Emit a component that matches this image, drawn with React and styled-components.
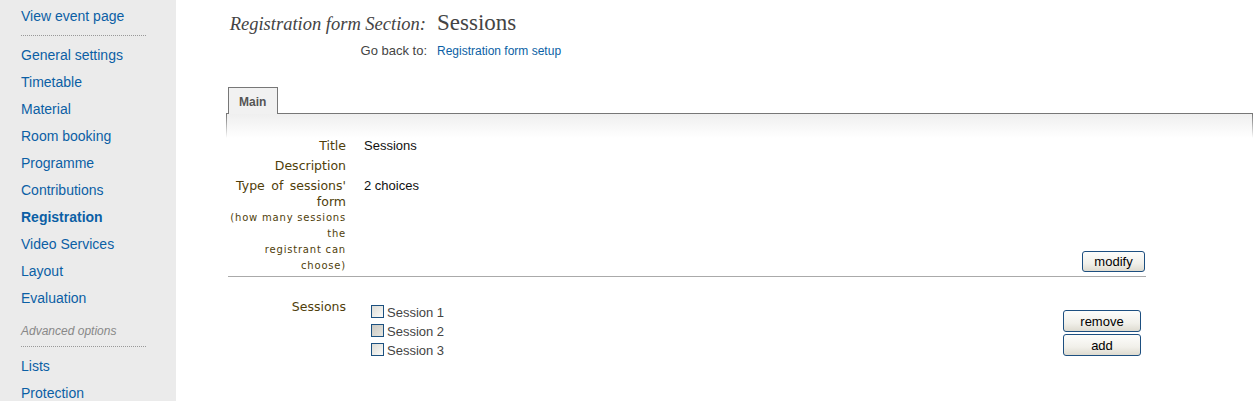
import React from 'react'
import styled, { createGlobalStyle } from 'styled-components'

const GlobalStyle = createGlobalStyle`
  html, body {
    margin: 0;
    padding: 0;
    background: #fff;
    font-family: "Liberation Sans", Arial, sans-serif;
  }
`

const menu = [
  'General settings',
  'Timetable',
  'Material',
  'Room booking',
  'Programme',
  'Contributions',
  'Registration',
  'Video Services',
  'Layout',
  'Evaluation',
]

const sessions = ['Session 1', 'Session 2', 'Session 3']

const hintLines = ['(how many sessions', 'the', 'registrant can', 'choose)']

export default function App() {
  return (
    <>
      <GlobalStyle />
      <Page>
        <Sidebar>
          <MenuLink>View event page</MenuLink>
          <Separator />
          {menu.map((item) => (
            <MenuLink key={item} active={item === 'Registration'}>
              {item}
            </MenuLink>
          ))}
          <GroupTitle>Advanced options</GroupTitle>
          <Separator />
          <MenuLink>Lists</MenuLink>
          <MenuLink>Protection</MenuLink>
        </Sidebar>

        <Main>
          <Header>
            <PageTitle>Registration form Section:</PageTitle>
            <PageName>Sessions</PageName>
            <BackLabel>Go back to:</BackLabel>
            <BackLink>Registration form setup</BackLink>
          </Header>

          <Tabs>
            <Tab>Main</Tab>
          </Tabs>
          <Panel>
            <FormTable>
              <Label>Title</Label>
              <Value>Sessions</Value>

              <Label>Description</Label>
              <Value />

              <Label divider>
                Type of sessions' form
                <Hint>
                  {hintLines.map((line) => (
                    <div key={line}>{line}</div>
                  ))}
                </Hint>
              </Label>
              <Value divider>
                2 choices
                <ButtonRow>
                  <Button width={63}>modify</Button>
                </ButtonRow>
              </Value>

              <Label spaced>Sessions</Label>
              <SessionCell>
                <SessionList>
                  {sessions.map((s, i) => (
                    <SessionItem key={s}>
                      <CheckBox dim={i === 1} />
                      {s}
                    </SessionItem>
                  ))}
                </SessionList>
                <ButtonColumn>
                  <Button width={78} tall>remove</Button>
                  <Button width={78} tall>add</Button>
                </ButtonColumn>
              </SessionCell>
            </FormTable>
          </Panel>
        </Main>
      </Page>
    </>
  )
}

const Page = styled.div`
  display: flex;
  min-height: 100vh;
`

const Sidebar = styled.nav`
  width: 176px;
  flex-shrink: 0;
  background: #ebebeb;
  padding: 3px 0 0 21px;
  box-sizing: border-box;
  display: flex;
  flex-direction: column;
  align-items: flex-start;
`

const MenuLink = styled.a`
  font-size: 14px;
  line-height: 27px;
  color: #0b5fa5;
  font-weight: ${(p) => (p.active ? 'bold' : 'normal')};
  cursor: pointer;
  white-space: nowrap;
`

const Separator = styled.div`
  width: 125px;
  border-top: 1px dotted #999;
  margin: 5px 0 6px;
`

const GroupTitle = styled.div`
  font-size: 12px;
  line-height: 16px;
  font-style: italic;
  color: #888;
  margin-top: 11px;
  margin-bottom: 2px;
`

const Main = styled.main`
  flex: 1;
  padding: 0 7px 0 50px;
`

const Header = styled.div`
  display: grid;
  grid-template-columns: 197px auto;
  column-gap: 11px;
  align-items: baseline;
  padding: 10px 0 0 3px;
`

const PageTitle = styled.h1`
  margin: 0;
  justify-self: end;
  font-family: "Liberation Serif", "Times New Roman", serif;
  font-style: italic;
  font-weight: normal;
  font-size: 18.5px;
  color: #444;
  white-space: nowrap;
`

const PageName = styled.span`
  font-family: "Liberation Serif", "Times New Roman", serif;
  font-size: 23px;
  color: #444;
`

const BackLabel = styled.span`
  justify-self: end;
  font-size: 13px;
  color: #444;
  margin-top: 7px;
  margin-right: -1px;
`

const BackLink = styled.a`
  font-size: 12px;
  color: #0b5fa5;
  cursor: pointer;
`

const Tabs = styled.div`
  display: flex;
  margin-top: 29px;
  padding-left: 2px;
`

const Tab = styled.div`
  position: relative;
  z-index: 1;
  margin-bottom: -1px;
  width: 50px;
  height: 27px;
  box-sizing: border-box;
  padding-left: 10px;
  line-height: 28px;
  border: 1px solid #777;
  border-bottom: none;
  background: #f1f1f1;
  font-size: 12px;
  font-weight: bold;
  color: #555;
`

const Panel = styled.section`
  border-top: 1px solid #777;
  padding: 22px 0 40px 2px;
  background:
    linear-gradient(#777, rgba(119, 119, 119, 0)) left top / 1px 24px no-repeat,
    linear-gradient(#777, rgba(119, 119, 119, 0)) right top / 1px 24px no-repeat,
    linear-gradient(#efefef, #fff) left top / 100% 24px no-repeat;
`

const FormTable = styled.div`
  width: 918px;
  display: grid;
  grid-template-columns: 118px 1fr;
  column-gap: 18px;
`

const Label = styled.div`
  text-align: right;
  font-family: "DejaVu Sans", Verdana, sans-serif;
  font-size: 12.5px;
  word-spacing: 2.5px;
  line-height: 16px;
  color: #4f3e0a;
  padding: ${(p) => (p.spaced ? '22px 0 2px' : '2px 0')};
  ${(p) => p.divider && 'border-bottom: 1px solid #aaa; margin-right: -18px; padding-right: 18px;'}
`

const Hint = styled.div`
  font-size: 10px;
  letter-spacing: 0.8px;
  word-spacing: 0;
  line-height: 16px;
`

const Value = styled.div`
  font-size: 13px;
  line-height: 16px;
  color: #111;
  padding: 2px 0;
  display: flex;
  flex-direction: column;
  ${(p) => p.divider && 'border-bottom: 1px solid #aaa; padding-bottom: 4px;'}
`

const ButtonRow = styled.div`
  margin-top: auto;
  display: flex;
  justify-content: flex-end;
  padding-right: 1px;
`

const Button = styled.button`
  width: ${(p) => p.width}px;
  height: ${(p) => (p.tall ? 22 : 21)}px;
  padding: 0;
  border: 1px solid #1d4f80;
  border-radius: 3px;
  background: linear-gradient(#fdfdfb, #f1f0ea 60%, #dedbd0);
  font-family: "Liberation Sans", Arial, sans-serif;
  font-size: 13px;
  color: #000;
  cursor: pointer;
`

const SessionCell = styled.div`
  display: flex;
  justify-content: space-between;
  padding-top: 24px;
`

const SessionList = styled.div`
  display: flex;
  flex-direction: column;
  padding: 2px 0 0 7px;
`

const SessionItem = styled.label`
  display: flex;
  align-items: center;
  height: 19px;
  font-size: 13px;
  color: #444;
`

const CheckBox = styled.span`
  width: 13px;
  height: 13px;
  box-sizing: border-box;
  border: 1px solid #1c5180;
  margin-right: 3px;
  margin-top: -3px;
  background: ${(p) =>
    p.dim
      ? 'linear-gradient(135deg, #c9c8c2, #e6e5df)'
      : 'linear-gradient(135deg, #dcdcd6, #fbfbf9)'};
`

const ButtonColumn = styled.div`
  display: flex;
  flex-direction: column;
  gap: 2px;
  margin: 9px 5px 0 0;
`
